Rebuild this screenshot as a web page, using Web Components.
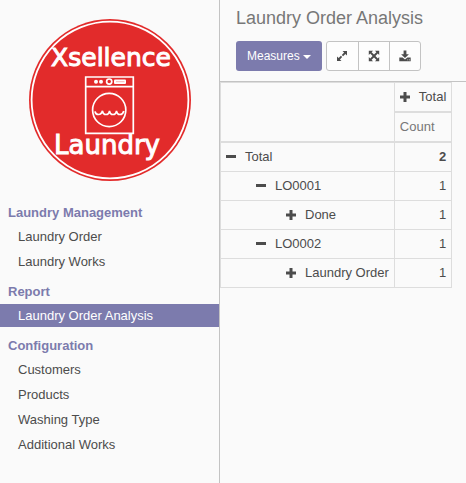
<!DOCTYPE html>
<html lang="en">
<head>
<meta charset="utf-8">
<title>Laundry Order Analysis</title>
<style>
  :root {
    --brand: #7c7bad;
    --text: #4c4c4c;
    --muted: #777;
    --line: #ddd;
    --line-strong: #c3c3c3;
    --bg: #fafafa;
  }
  body {
    margin: 0;
    background: var(--bg);
    color: var(--text);
    font-family: "Liberation Sans", Arial, sans-serif;
    font-size: 13px;
    line-height: 18px;
  }
</style>
</head>
<body>
<app-shell>
  <side-menu slot="menu">
    <company-logo slot="logo"></company-logo>
    <menu-section heading="Laundry Management">
      <menu-link>Laundry Order</menu-link>
      <menu-link>Laundry Works</menu-link>
    </menu-section>
    <menu-section heading="Report">
      <menu-link active>Laundry Order Analysis</menu-link>
    </menu-section>
    <menu-section heading="Configuration">
      <menu-link>Customers</menu-link>
      <menu-link>Products</menu-link>
      <menu-link>Washing Type</menu-link>
      <menu-link>Additional Works</menu-link>
    </menu-section>
  </side-menu>
  <control-panel heading="Laundry Order Analysis"></control-panel>
  <pivot-table></pivot-table>
</app-shell>

<script>
class AppShell extends HTMLElement {
  constructor() {
    super();
    this.attachShadow({ mode: 'open' });
  }

  connectedCallback() {
    this.shadowRoot.innerHTML = `
      <style>
        :host {
          display: grid;
          grid-template-columns: 220px minmax(0, 1fr);
          min-height: 100vh;
        }
        aside {
          border-right: 1px solid var(--line-strong);
        }
      </style>
      <aside><slot name="menu"></slot></aside>
      <main><slot></slot></main>
    `;
  }
}

class SideMenu extends HTMLElement {
  constructor() {
    super();
    this.attachShadow({ mode: 'open' });
  }

  connectedCallback() {
    this.shadowRoot.innerHTML = `
      <style>
        :host {
          display: block;
          padding-top: 19px;
        }
        nav {
          display: flex;
          flex-direction: column;
          gap: 10px;
          padding-top: 23px;
        }
      </style>
      <slot name="logo"></slot>
      <nav><slot></slot></nav>
    `;
  }
}

class CompanyLogo extends HTMLElement {
  constructor() {
    super();
    this.attachShadow({ mode: 'open' });
  }

  connectedCallback() {
    this.shadowRoot.innerHTML = `
      <style>
        :host {
          display: flex;
          justify-content: center;
        }
        svg {
          display: block;
          width: 162px;
          height: 162px;
        }
        text {
          font-family: "DejaVu Sans", sans-serif;
          fill: #fff;
          stroke: #fff;
          stroke-width: 1;
          text-anchor: middle;
        }
      </style>
      <svg viewBox="29 19 162 162" role="img" aria-label="Xsellence Laundry">
        <circle cx="110" cy="100" r="81" fill="#e22b2b"/>
        <circle cx="110" cy="100" r="78.4" fill="none" stroke="#fff" stroke-width="1.8"/>
        <text x="111" y="66" font-size="25">Xsellence</text>
        <text x="107" y="154" font-size="26">Laundry</text>
        <g fill="none" stroke="#fff" stroke-width="1.7">
          <path d="M85.7 77h47.6v56.3H85.7zM85.7 86.7h47.6"/>
          <circle cx="109.2" cy="110" r="16.6"/>
          <circle cx="109.2" cy="81.6" r="2.6"/>
          <path d="M95 111.300Q95.500 114.500 98.500 114.500T102.500 110.800Q103 114.500 106 114.500T109.500 110.800Q110 114.500 113 114.500T116.500 110.800Q117 114.500 120 114.500T123.800 111"/>
        </g>
        <g fill="#fff">
          <circle cx="96" cy="81.700" r="2"/>
          <circle cx="101" cy="81.700" r="2"/>
          <rect x="114" y="79.500" width="12" height="4.400" rx="1"/>
        </g>
        <path d="M116 81.700h8.500" stroke="#f5b5b5" stroke-width="1"/>
      </svg>
    `;
  }
}

class MenuSection extends HTMLElement {
  constructor() {
    super();
    this.attachShadow({ mode: 'open' });
  }

  connectedCallback() {
    this.shadowRoot.innerHTML = `
      <style>
        :host {
          display: block;
        }
        h2 {
          margin: 0 0 3px;
          padding-left: 8px;
          color: var(--brand);
          font-size: 13px;
          line-height: 18px;
          font-weight: bold;
        }
        div {
          display: flex;
          flex-direction: column;
          gap: 2px;
        }
      </style>
      <h2>${this.getAttribute('heading')}</h2>
      <div><slot></slot></div>
    `;
  }
}

class MenuLink extends HTMLElement {
  constructor() {
    super();
    this.attachShadow({ mode: 'open' });
  }

  connectedCallback() {
    this.shadowRoot.innerHTML = `
      <style>
        :host {
          display: block;
        }
        a {
          display: block;
          padding: 3px 8px 2px 18px;
          color: inherit;
          text-decoration: none;
        }
        :host([active]) a {
          background: var(--brand);
          color: #fff;
        }
      </style>
      <a href="#"><slot></slot></a>
    `;
  }
}

class ControlPanel extends HTMLElement {
  constructor() {
    super();
    this.attachShadow({ mode: 'open' });
  }

  connectedCallback() {
    this.shadowRoot.innerHTML = `
      <style>
        :host {
          display: block;
          padding: 6px 16px 10px;
          border-bottom: 1px solid var(--line-strong);
        }
        h1 {
          margin: 0 0 11px;
          color: var(--muted);
          font-size: 18px;
          line-height: 24px;
          font-weight: normal;
        }
        .toolbar {
          display: flex;
          gap: 4px;
        }
        .group {
          display: flex;
          border: 1px solid var(--line-strong);
          border-radius: 3px;
          background: #fdfdfd;
        }
        button {
          display: flex;
          align-items: center;
          justify-content: center;
          margin: 0;
          border: 0;
          background: none;
          color: var(--text);
          font: inherit;
          font-size: 12px;
        }
        .group button {
          width: 31px;
          height: 28px;
          padding: 0;
        }
        .group button + button {
          border-left: 1px solid var(--line-strong);
        }
        .measures {
          gap: 3px;
          height: 30px;
          padding: 0 11px;
          border-radius: 3px;
          background: var(--brand);
          color: #fff;
        }
        .caret {
          margin-top: 2px;
          border: 4px solid transparent;
          border-top-color: #fff;
          border-bottom: 0;
        }
        svg {
          display: block;
          width: 12px;
          height: 12px;
          fill: currentColor;
        }
      </style>
      <h1>${this.getAttribute('heading')}</h1>
      <div class="toolbar">
        <button class="measures" type="button">Measures<span class="caret"></span></button>
        <div class="group">
          <button type="button" aria-label="Flip axis">
            <svg viewBox="0 0 12 12"><path d="M6.500 1H11v4.500L9.400 3.900 7.100 6.200 5.800 4.900 8.100 2.600zM1 6.500l1.600 1.600 2.300-2.300 1.300 1.300-2.300 2.300L5.500 11H1z"/></svg>
          </button>
          <button type="button" aria-label="Expand all">
            <svg viewBox="0 0 12 12"><path d="M.8.8H5L3.600 2.200 6 4.600l2.400-2.400L7 .8h4.200V5L9.800 3.600 7.400 6l2.400 2.400L11.200 7v4.200H7l1.400-1.400L6 7.400 3.600 9.800 5 11.200H.8V7l1.400 1.400L4.600 6 2.200 3.600.8 5z"/></svg>
          </button>
          <button type="button" aria-label="Download">
            <svg viewBox="0 0 12 12"><path d="M4.600.5h2.800v3.700h2.500L6 8.100 2.100 4.200h2.500zM.3 7.600h3.300L6 9.600l2.400-2h3.300v3.600H.3zM8.400 9.400v.8h.8v-.8zM10 9.400v.8h.8v-.8z" fill-rule="evenodd"/></svg>
          </button>
        </div>
      </div>
    `;
  }
}

class PivotTable extends HTMLElement {
  constructor() {
    super();
    this.attachShadow({ mode: 'open' });
    this.rows = [
      { label: 'Total', level: 0, open: true, count: 2 },
      { label: 'LO0001', level: 1, open: true, count: 1 },
      { label: 'Done', level: 2, open: false, count: 1 },
      { label: 'LO0002', level: 1, open: true, count: 1 },
      { label: 'Laundry Order', level: 2, open: false, count: 1 }
    ];
  }

  connectedCallback() {
    this.render();
  }

  icon(open) {
    const path = open ? 'M0 3h10v3H0z' : 'M3.500 0h3v3.500H10v3H6.500V10h-3V6.500H0v-3h3.500z';
    return `<svg viewBox="0 0 10 10" aria-hidden="true"><path d="${path}"/></svg>`;
  }

  renderRow(row) {
    return `
      <tr class="level-${row.level}">
        <th scope="row"><span>${this.icon(row.open)}${row.label}</span></th>
        <td>${row.count}</td>
      </tr>
    `;
  }

  render() {
    this.shadowRoot.innerHTML = `
      <style>
        :host {
          display: block;
        }
        table {
          border-collapse: collapse;
        }
        th, td {
          padding: 5px;
          border: 1px solid var(--line);
          font-weight: normal;
          text-align: left;
        }
        thead th {
          border-bottom-width: 2px;
        }
        td {
          text-align: right;
        }
        .measure {
          color: var(--muted);
        }
        .level-0 td {
          font-weight: bold;
        }
        .level-1 th {
          padding-left: 35px;
        }
        .level-2 th {
          padding-left: 65px;
        }
        span {
          display: flex;
          align-items: center;
          gap: 9px;
        }
        svg {
          width: 10px;
          height: 10px;
          fill: currentColor;
        }
      </style>
      <table>
        <thead>
          <tr><th rowspan="2"></th><th scope="col"><span>${this.icon(false)}Total</span></th></tr>
          <tr><th scope="col" class="measure">Count</th></tr>
        </thead>
        <tbody>${this.rows.map((row) => this.renderRow(row)).join('')}</tbody>
      </table>
    `;
  }
}

customElements.define('app-shell', AppShell);
customElements.define('side-menu', SideMenu);
customElements.define('company-logo', CompanyLogo);
customElements.define('menu-section', MenuSection);
customElements.define('menu-link', MenuLink);
customElements.define('control-panel', ControlPanel);
customElements.define('pivot-table', PivotTable);
</script>
</body>
</html>
